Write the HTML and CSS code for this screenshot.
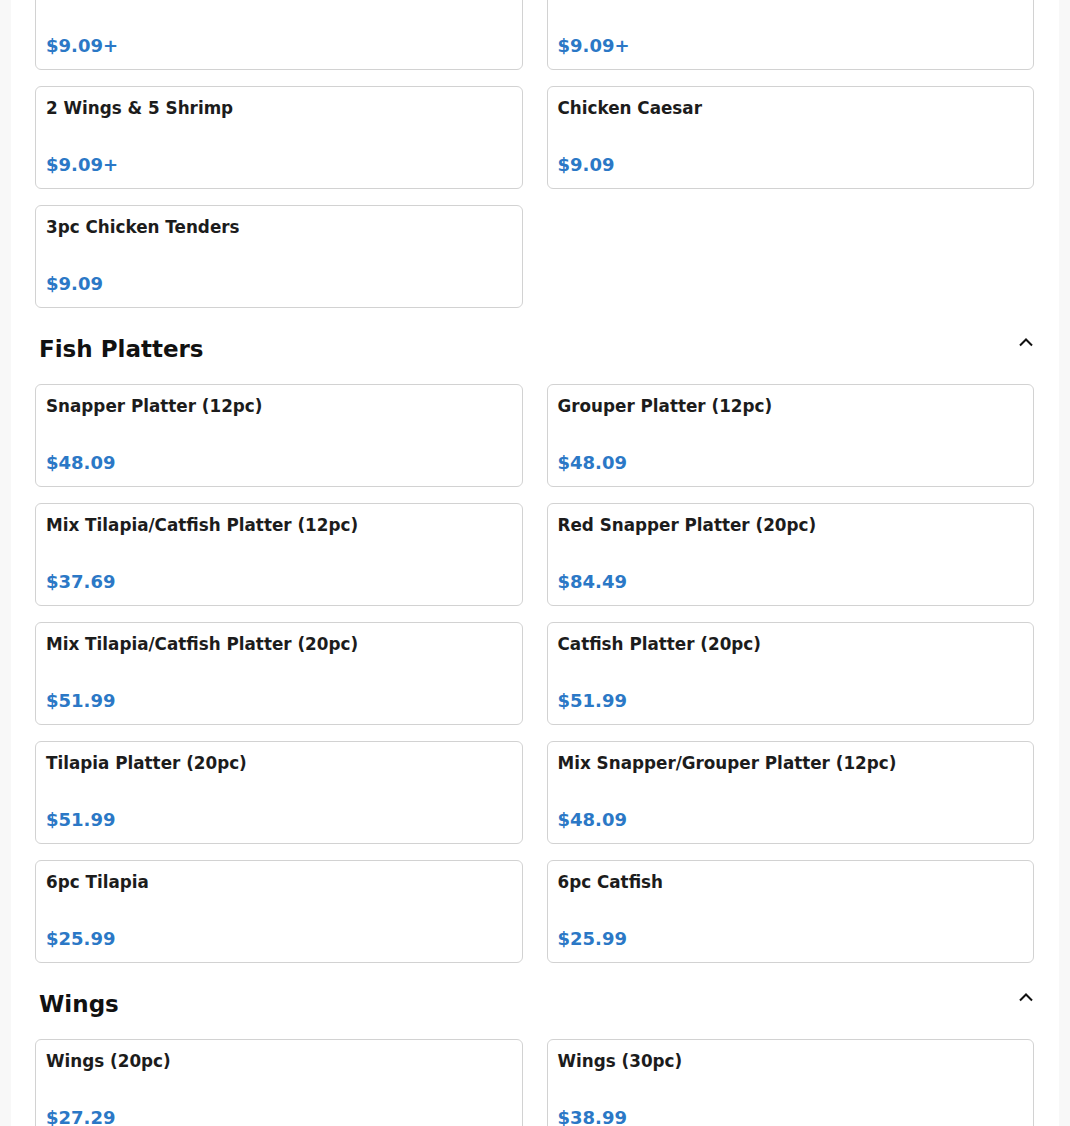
FILE: index.html
```html
<!DOCTYPE html>
<html lang="en">
<head>
<meta charset="utf-8">
<title>Menu</title>
<link rel="stylesheet" href="styles.css">
</head>
<body>
<main class="page">
  <section class="section section--first">
    <div class="grid">
      <div class="card"><div class="card-title">6 Shrimp &amp; 2 Wings</div><div class="card-price">$9.09+</div></div>
      <div class="card"><div class="card-title">4 Shrimp &amp; 1 Fish</div><div class="card-price">$9.09+</div></div>
      <div class="card"><div class="card-title">2 Wings &amp; 5 Shrimp</div><div class="card-price">$9.09+</div></div>
      <div class="card"><div class="card-title">Chicken Caesar</div><div class="card-price">$9.09</div></div>
      <div class="card"><div class="card-title">3pc Chicken Tenders</div><div class="card-price">$9.09</div></div>
    </div>
  </section>

  <section class="section">
    <div class="section-head">
      <h2 class="section-title">Fish Platters</h2>
      <svg class="chevron" width="16" height="10" viewBox="0 0 16 10"><polyline points="2,8.5 8,2.5 14,8.5" fill="none" stroke="#111" stroke-width="2"/></svg>
    </div>
    <div class="grid">
      <div class="card"><div class="card-title">Snapper Platter (12pc)</div><div class="card-price">$48.09</div></div>
      <div class="card"><div class="card-title">Grouper Platter (12pc)</div><div class="card-price">$48.09</div></div>
      <div class="card"><div class="card-title">Mix Tilapia/Catfish Platter (12pc)</div><div class="card-price">$37.69</div></div>
      <div class="card"><div class="card-title">Red Snapper Platter (20pc)</div><div class="card-price">$84.49</div></div>
      <div class="card"><div class="card-title">Mix Tilapia/Catfish Platter (20pc)</div><div class="card-price">$51.99</div></div>
      <div class="card"><div class="card-title">Catfish Platter (20pc)</div><div class="card-price">$51.99</div></div>
      <div class="card"><div class="card-title">Tilapia Platter (20pc)</div><div class="card-price">$51.99</div></div>
      <div class="card"><div class="card-title">Mix Snapper/Grouper Platter (12pc)</div><div class="card-price">$48.09</div></div>
      <div class="card"><div class="card-title">6pc Tilapia</div><div class="card-price">$25.99</div></div>
      <div class="card"><div class="card-title">6pc Catfish</div><div class="card-price">$25.99</div></div>
    </div>
  </section>

  <section class="section">
    <div class="section-head">
      <h2 class="section-title">Wings</h2>
      <svg class="chevron" width="16" height="10" viewBox="0 0 16 10"><polyline points="2,8.5 8,2.5 14,8.5" fill="none" stroke="#111" stroke-width="2"/></svg>
    </div>
    <div class="grid">
      <div class="card"><div class="card-title">Wings (20pc)</div><div class="card-price">$27.29</div></div>
      <div class="card"><div class="card-title">Wings (30pc)</div><div class="card-price">$38.99</div></div>
    </div>
  </section>
</main>
</body>
</html>
```

FILE: styles.css
```css
html, body {
  margin: 0;
  padding: 0;
}

body {
  background: #f8f8f8;
  font-family: "DejaVu Sans", "Liberation Sans", sans-serif;
  color: #1c1c1c;
  overflow: hidden;
}

.page {
  max-width: 999px;
  margin: -33px auto 0;
  padding: 0 25px 40px 24px;
  background: #ffffff;
  min-height: 1300px;
}

.grid {
  display: grid;
  grid-template-columns: 1fr 1fr;
  column-gap: 24px;
  row-gap: 16px;
}

.card {
  border: 1px solid #d2d2d2;
  border-radius: 6px;
  padding: 9px 10px 10px;
  display: flex;
  flex-direction: column;
  background: #fff;
}

.card-title {
  font-size: 16.8px;
  font-weight: bold;
  line-height: 24px;
  color: #1c1c1c;
  margin-bottom: 31px;
}

.card-price {
  font-size: 18px;
  font-weight: bold;
  line-height: 27px;
  color: #2b78c6;
}

.section-head {
  display: flex;
  align-items: center;
  justify-content: space-between;
  margin: 25px 0 18px;
  padding: 0 0 0 4px;
}

.section-title {
  margin: 0;
  font-size: 23px;
  font-weight: bold;
  line-height: 33px;
  color: #111;
}

.chevron {
  display: block;
  margin-top: -15px;
}
```
